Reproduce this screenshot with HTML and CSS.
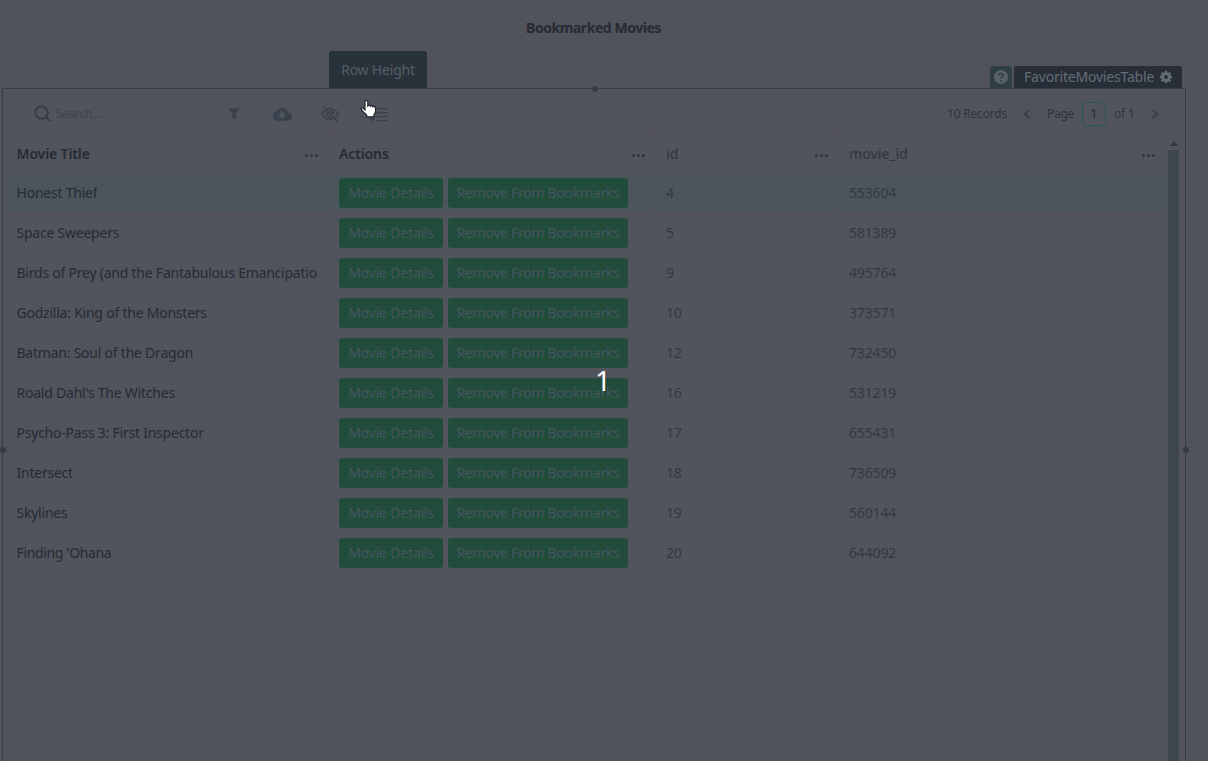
FILE: index.html
```html
<!DOCTYPE html>
<html lang="en">
<head>
<meta charset="utf-8">
<title>Bookmarked Movies</title>
<link rel="stylesheet" href="styles.css">
</head>
<body>
<main class="page">
  <header class="page-head"><h1>Bookmarked Movies</h1></header>
  <section class="frame">
    <div class="widget">
      <div class="toolbar">
        <svg class="i-search" width="18" height="18" viewBox="0 0 18 18"><circle cx="7.6" cy="7.6" r="6.2"/><path d="M12 12l4.5 4.5"/></svg>
        <span class="search">Search...</span>
        <svg class="tool i-filter" width="20" height="20" viewBox="0 0 20 20"><path d="M4.500 4.500h11l-3.600 5v6.500l-3.800-2.800v-3.700z"/></svg>
        <svg class="tool i-cloud" width="20" height="20" viewBox="0 0 20 20"><path fill-rule="evenodd" d="M15.900 8.200A6 6 0 0 0 4.700 7 5 5 0 0 0 5.200 16.800h10.300a4.300 4.300 0 0 0 .4-8.600zM8.300 7.500h3.400v3.300h2.500L10 15l-4.200-4.200h2.500z"/></svg>
        <svg class="tool i-eye" width="20" height="20" viewBox="0 0 20 20"><g fill="none" stroke="currentColor" stroke-width="1.700"><path d="M7 5.200C12.500 3.500 16.500 6.600 18.200 10q-.9 2-2.700 3.500M13 15C7.500 16.500 3.500 13.500 1.800 10q.9-2 2.700-3.500M7.200 8.500a3.300 3.300 0 0 0 4.300 4.500M10 6.800a3.200 3.200 0 0 1 3.200 3.600M3 2.500L17.500 17.500"/></g></svg>
        <svg class="tool i-rows" width="24" height="20" viewBox="0 0 24 20"><path d="M4 3l3.500 4h-7zM4 17.500l3.500-4h-7zM3.300 6h1.500v8H3.300zM8 4h12v1.200H8zM8 8h12v1.200H8zM8 12h12v1.200H8zM8 16h12v1.200H8z"/></svg>
        <div class="pager">
          <span class="records">10 Records</span>
          <span class="nav"><svg width="10" height="12" viewBox="0 0 10 12"><path d="M7.500 1.500L3 6l4.500 4.500"/></svg></span>
          <span class="label-page">Page</span>
          <span class="current">1</span>
          <span class="of">of 1</span>
          <span class="nav"><svg width="10" height="12" viewBox="0 0 10 12"><path d="M2.500 1.500L7 6l-4.500 4.500"/></svg></span>
        </div>
      </div>
      <div class="table-area">
        <div class="table">
          <div class="row head"><div class="cell strong">Movie Title<i class="more"></i></div><div class="cell strong">Actions<i class="more"></i></div><div class="cell hidden-col">id<i class="more"></i></div><div class="cell hidden-col">movie_id<i class="more"></i></div></div>
          <div class="row selected"><div class="cell title"><span>Honest Thief</span></div><div class="cell"><b class="btn a">Movie Details</b><b class="btn b">Remove From Bookmarks</b></div><div class="cell num">4</div><div class="cell num">553604</div></div>
          <div class="row"><div class="cell title"><span>Space Sweepers</span></div><div class="cell"><b class="btn a">Movie Details</b><b class="btn b">Remove From Bookmarks</b></div><div class="cell num">5</div><div class="cell num">581389</div></div>
          <div class="row"><div class="cell title"><span>Birds of Prey (and the Fantabulous Emancipation</span></div><div class="cell"><b class="btn a">Movie Details</b><b class="btn b">Remove From Bookmarks</b></div><div class="cell num">9</div><div class="cell num">495764</div></div>
          <div class="row"><div class="cell title"><span>Godzilla: King of the Monsters</span></div><div class="cell"><b class="btn a">Movie Details</b><b class="btn b">Remove From Bookmarks</b></div><div class="cell num">10</div><div class="cell num">373571</div></div>
          <div class="row"><div class="cell title"><span>Batman: Soul of the Dragon</span></div><div class="cell"><b class="btn a">Movie Details</b><b class="btn b">Remove From Bookmarks</b></div><div class="cell num">12</div><div class="cell num">732450</div></div>
          <div class="row"><div class="cell title"><span>Roald Dahl's The Witches</span></div><div class="cell"><b class="btn a">Movie Details</b><b class="btn b">Remove From Bookmarks</b></div><div class="cell num">16</div><div class="cell num">531219</div></div>
          <div class="row"><div class="cell title"><span>Psycho-Pass 3: First Inspector</span></div><div class="cell"><b class="btn a">Movie Details</b><b class="btn b">Remove From Bookmarks</b></div><div class="cell num">17</div><div class="cell num">655431</div></div>
          <div class="row"><div class="cell title"><span>Intersect</span></div><div class="cell"><b class="btn a">Movie Details</b><b class="btn b">Remove From Bookmarks</b></div><div class="cell num">18</div><div class="cell num">736509</div></div>
          <div class="row"><div class="cell title"><span>Skylines</span></div><div class="cell"><b class="btn a">Movie Details</b><b class="btn b">Remove From Bookmarks</b></div><div class="cell num">19</div><div class="cell num">560144</div></div>
          <div class="row"><div class="cell title"><span class="tight">Finding 'Ohana</span></div><div class="cell"><b class="btn a">Movie Details</b><b class="btn b">Remove From Bookmarks</b></div><div class="cell num">20</div><div class="cell num">644092</div></div>
          <div class="row empty"></div><div class="row empty"></div><div class="row empty"></div><div class="row empty"></div><div class="row empty"></div>
        </div>
        <div class="scrollbar"><i class="arrow"></i><i class="thumb"></i></div>
      </div>
    </div>
  </section>
  <div class="tooltip">Row Height</div>
  <div class="tags">
    <span class="help"><svg width="16" height="16" viewBox="0 0 16 16"><circle cx="8" cy="8" r="7" fill="#586068"/><path d="M5.900 6.300c0-2.800 4.300-2.500 4.200 0 0 1.500-2.100 1.600-2.100 3.100M8 11v1.700" fill="none" stroke="#303f45" stroke-width="1.700"/></svg></span>
    <span class="name"><span>FavoriteMoviesTable</span><svg width="14" height="14" viewBox="0 0 14 14"><circle cx="7" cy="7" r="3.400" fill="none" stroke="#656c76" stroke-width="2.800"/><path d="M7 .8v2.400M7 10.800v2.400M.8 7h2.400M10.800 7h2.400M2.600 2.600l1.700 1.700M9.700 9.700l1.700 1.700M11.400 2.600L9.700 4.300M4.300 9.700l-1.700 1.700" stroke="#656c76" stroke-width="2.300"/></svg></span>
  </div>
  <i class="handle top"></i><i class="handle left"></i><i class="handle right"></i>
  <div class="countdown">1</div>
  <svg class="cursor" width="18" height="20" viewBox="0 0 18 20"><path d="M5 10V3q0-1.700 1.400-1.700T7.800 3v3.700q1.600-1.200 2.600.3 1.400-.8 2.500.5 2.600-.5 2.600 1.800V13l-1.600 3v1.800H6.700V16L3.300 13 1.200 10.500q-.5-1.800 1.600-1.500L5 11z" fill="#fff" stroke="#222529" stroke-width="1.200"/><path d="M7.800 6.500v2M10.400 7v1.500M12.900 7.500V9" stroke="#333" stroke-width=".6"/></svg>
</main>
</body>
</html>
```
FILE: styles.css
```css
* { box-sizing: border-box; }
body { margin: 0; }
.page {
  position: relative;
  width: 1208px;
  height: 761px;
  overflow: hidden;
  background: #505359;
  color: #272a34;
  font: 14px/20px "Noto Sans", sans-serif;
}
.page-head { height: 88px; padding-top: 18px; padding-right: 21px; text-align: center; }
h1 { margin: 0; font-size: 14px; line-height: 20px; font-weight: 700; letter-spacing: -.45px; }
.frame { width: 1184px; height: 700px; margin-left: 2px; border: 1px solid #363c41; padding: 3px; background: #51545c; }
.widget { border-top: 1px dotted #534a56; border-left: 1px dotted #534c58; }
.toolbar { display: flex; align-items: center; height: 42px; padding: 0 15px 0 27px; border-bottom: 1px dotted #5a4858; font-size: 12px; }
.i-search { fill: none; stroke: #373c48; stroke-width: 2; }
.search { width: 172px; padding-left: 4px; color: #3f434e; letter-spacing: -.25px; }
.tool { fill: #39414d; color: #39414d; margin-right: 28px; flex: none; }
.i-rows { margin: 0; }
.pager { display: flex; align-items: center; margin-left: auto; color: #30343f; }
.nav { display: flex; align-items: center; justify-content: center; width: 24px; height: 24px; border-radius: 4px; background: #4d5359; }
.nav path { fill: none; stroke: #333c48; stroke-width: 1.600; }
.records { width: 68px; letter-spacing: -.2px; }
.label-page { width: 43px; padding-left: 8px; letter-spacing: -.3px; }
.current { width: 24px; height: 24px; border: 1px solid #28584f; border-radius: 4px; text-align: center; line-height: 22px; color: #252831; }
.of { width: 37px; padding-left: 8px; letter-spacing: -.2px; }
.table-area { display: flex; gap: 2px; }
.table { width: 1159px; flex: none; }
.row { display: grid; grid-template-columns: 322px 327px 183px 1fr; height: 40px; border-bottom: 1px dotted #564a56; }
.head { height: 38px; border-bottom-color: #5a4858; }
.cell { position: relative; display: flex; align-items: center; min-width: 0; padding-left: 10px; padding-right: 10px; border-right: 1px dotted #514f58; }
.cell:first-child { padding-left: 9.5px; }
.head .cell, .selected .cell { border-right-color: #5d4757; }
.cell:last-child { border-right-color: transparent; }
.selected { background: #4c555c; border-bottom-color: #614454; }
.strong { font-weight: 600; letter-spacing: -.12px; }
.title span { overflow: hidden; white-space: nowrap; letter-spacing: -.23px; }
.title .tight { letter-spacing: -.35px; }
.hidden-col, .num { color: #343842; }
.hidden-col { font-weight: 500; letter-spacing: -.05px; }
.num { letter-spacing: -.15px; }
.empty { border-bottom-color: #464a52; }
.more { width: 3px; height: 3px; margin: 4px 5px 0 auto; border-radius: 50%; background: #303540; box-shadow: -5px 0 #303540, 5px 0 #303540; }
.btn { height: 30px; border-radius: 3px; line-height: 29px; text-align: center; font-weight: 400; color: #45565f; white-space: nowrap; background: radial-gradient(circle at 1px 1px, #22553a .5px, transparent 1px) 0 0 / 4px 4px, radial-gradient(circle at 3px 3px, #224644 .5px, transparent 1px) 0 0 / 4px 4px, #214b3a; }
.a { width: 104px; margin-right: 5px; letter-spacing: -.2px; }
.b { width: 180px; letter-spacing: -.28px; }
.scrollbar { width: 12px; height: 640px; }
.arrow { display: block; margin: 6px auto 4px; width: 0; border: 4px solid transparent; border-top: 0; border-bottom: 5px solid #31373f; }
.thumb { display: block; width: 11px; height: 630px; background: repeating-linear-gradient(90deg, #38424a 0 1px, #434950 1px 2px); }
.tooltip { position: absolute; left: 329px; top: 51px; width: 98px; height: 37px; border-radius: 3px 3px 0 0; background: #28323a; color: #555d66; line-height: 38px; text-align: center; letter-spacing: -.2px; }
.tags { position: absolute; left: 990px; top: 66px; display: flex; gap: 2px; height: 22px; }
.help { display: flex; width: 22px; align-items: center; justify-content: center; border-radius: 3px 3px 0 0; background: #303f45; }
.name { display: flex; align-items: center; justify-content: space-between; width: 168px; padding: 0 9px 0 10px; border-radius: 2px 2px 0 0; background: #282e37; color: #656c76; letter-spacing: -.2px; }
.handle { position: absolute; width: 6px; height: 6px; border-radius: 50%; background: #343d45; }
.top { left: 592px; top: 86px; }
.left { left: 0; top: 447px; }
.right { left: 1183px; top: 447px; }
.countdown { position: absolute; left: 595px; top: 362px; color: #fff; font: 28px/36px "Noto Sans", sans-serif; }
.cursor { position: absolute; left: 360px; top: 99px; }
```
